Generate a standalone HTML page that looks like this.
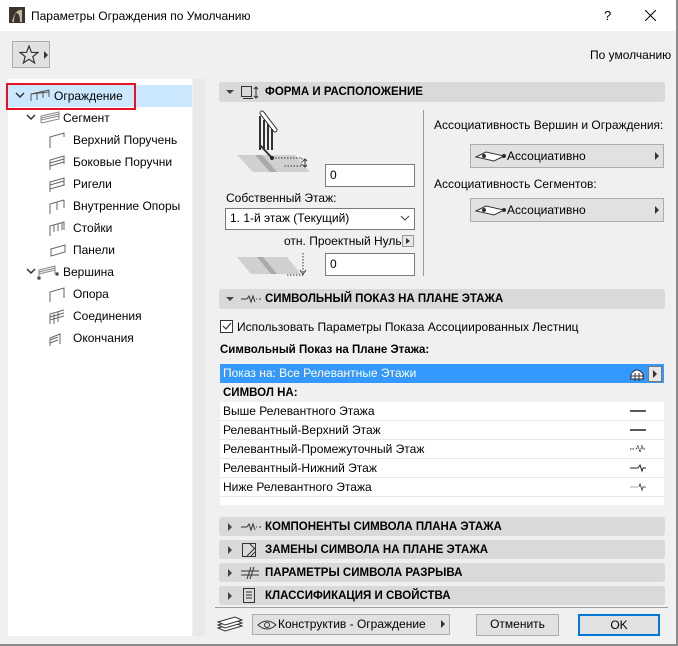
<!DOCTYPE html><html><head><meta charset="utf-8"><style>
*{margin:0;padding:0;box-sizing:border-box}
body{width:678px;height:646px;background:#f0f0f0;font-family:"Liberation Sans",sans-serif;font-size:12px;color:#000;position:relative;overflow:hidden}
.a{position:absolute;white-space:nowrap}
.hdr{position:absolute;left:219px;width:446px;height:20px;background:#d9d9d9;border-radius:3px;font-weight:bold;font-size:11.5px;line-height:21px}
.hdr .t{position:absolute;left:46px}
.tri{position:absolute;left:7px;top:8px;width:0;height:0;border-left:4px solid transparent;border-right:4px solid transparent;border-top:4px solid #444}
.trr{position:absolute;left:9px;top:6px;width:0;height:0;border-top:4px solid transparent;border-bottom:4px solid transparent;border-left:4px solid #444}
.inp{position:absolute;background:#fff;border:1px solid #7a7a7a;padding-left:4px;line-height:20px}
.btn{position:absolute;background:#e1e1e1;border:1px solid #adadad;text-align:center;line-height:19px}
.tr{position:absolute;white-space:nowrap;line-height:16px}
.row{position:absolute;left:220px;width:444px;height:19px;background:#fff;border-bottom:1px solid #e8e8e8;line-height:19px;padding-left:3px}
.row svg{position:absolute;right:18px;top:4px}
</style></head><body>
<div class="a" style="left:0;top:0;width:678px;height:31px;background:#fff"></div>
<svg class="a" style="left:9px;top:7px" width="16" height="16"><rect width="16" height="16" fill="#3a3530"/><path d="M3 15 Q6 2 13 3 L13 15 L11 15 Q11 6 7 6 Q5 9 5 15Z" fill="#c8b89a"/></svg>
<div class="a" style="left:31px;top:9px;font-size:12px">Параметры Ограждения по Умолчанию</div>
<div class="a" style="left:604px;top:8px;font-size:13px">?</div>
<svg class="a" style="left:645px;top:10px" width="11" height="11"><path d="M0 0L11 11M11 0L0 11" stroke="#000" stroke-width="1"/></svg>
<div class="a" style="left:676px;top:0;width:2px;height:646px;background:#8a8a8a"></div>
<div class="a" style="left:0;top:644px;width:678px;height:2px;background:#8a8a8a"></div>
<div class="a" style="left:12px;top:41px;width:38px;height:27px;border:1px solid #adadad;background:#e1e1e1"></div>
<svg class="a" style="left:19px;top:45px" width="20" height="19"><path d="M10 1L12.4 7.3 19 7.5 13.8 11.6 15.6 18 10 14.3 4.4 18 6.2 11.6 1 7.5 7.6 7.3Z" fill="none" stroke="#333" stroke-width="1.2"/></svg>
<div class="a" style="left:44px;top:51px;border-top:4px solid transparent;border-bottom:4px solid transparent;border-left:4px solid #333"></div>
<div class="a" style="left:590px;top:48px">По умолчанию</div>
<div class="a" style="left:8px;top:79px;width:184px;height:557px;background:#fff"></div>
<div class="a" style="left:193px;top:79px;width:12px;height:557px;background:#e8e8e8"></div>
<div class="a" style="left:8px;top:85px;width:184px;height:22px;background:#cce8ff"></div>
<div class="a" style="left:6px;top:83px;width:130px;height:27px;border:2px solid #e81123"></div>
<svg class="a" style="left:15px;top:92px" width="10" height="7"><path d="M1 1L5 5 9 1" fill="none" stroke="#333" stroke-width="1.5"/></svg>
<svg class="a" style="left:30px;top:89px" width="20" height="13"><path d="M1 12V5L19 1V8M1 5L19 3M7 11V4M13 9V2" fill="none" stroke="#555" stroke-width="1"/></svg>
<div class="tr" style="left:54px;top:88px">Ограждение</div>
<svg class="a" style="left:26px;top:114px" width="10" height="7"><path d="M1 1L5 5 9 1" fill="none" stroke="#333" stroke-width="1.5"/></svg>
<svg class="a" style="left:40px;top:111px" width="20" height="13"><path d="M1 12V5L19 1V8L1 12M1 7L19 3M1 9L19 5" fill="none" stroke="#888" stroke-width="1"/></svg>
<div class="tr" style="left:63px;top:110px">Сегмент</div>
<div class="tr" style="left:73px;top:132px">Верхний Поручень</div>
<div class="tr" style="left:73px;top:154px">Боковые Поручни</div>
<div class="tr" style="left:73px;top:176px">Ригели</div>
<div class="tr" style="left:73px;top:198px">Внутренние Опоры</div>
<div class="tr" style="left:73px;top:220px">Стойки</div>
<div class="tr" style="left:73px;top:242px">Панели</div>
<svg class="a" style="left:26px;top:268px" width="10" height="7"><path d="M1 1L5 5 9 1" fill="none" stroke="#333" stroke-width="1.5"/></svg>
<div class="tr" style="left:63px;top:264px">Вершина</div>
<div class="tr" style="left:73px;top:286px">Опора</div>
<div class="tr" style="left:73px;top:308px">Соединения</div>
<div class="tr" style="left:73px;top:330px">Окончания</div>
<svg class="a" style="left:48px;top:132px" width="20" height="220" fill="none" stroke="#666" stroke-width="1">
<path d="M2 16V5L16 1V5"/>
<path d="M2 38V28L16 24V32M2 31L16 27M2 34L16 30"/>
<path d="M2 60V50L16 46V54M2 53L16 49M2 57L16 53"/>
<path d="M2 82V72L16 68M9 78V70M16 68V76"/>
<path d="M2 104V94L16 90V98M6 100V93M10 99V92M14 98V91"/>
<path d="M3 124L3 117L17 113L17 120L3 124Z"/>
<path d="M2 170V160L16 156V166"/>
<path d="M2 192V182L16 178M2 185L16 181M2 188L16 184M6 192V182M10 190V180"/>
<path d="M2 214V206L12 202V212M2 208L10 205M2 211L10 208"/>
</svg>
<svg class="a" style="left:36px;top:264px" width="24" height="16" fill="none" stroke="#888" stroke-width="1"><path d="M3 14V6L19 2V10M3 8L19 4M3 10L19 6"/><circle cx="3" cy="14" r="1.5" fill="#333"/><circle cx="21" cy="10" r="1.5" fill="#333"/></svg>
<div class="hdr" style="top:82px"><div class="tri"></div>
<svg class="a" style="left:21px;top:3px" width="20" height="15" fill="none" stroke="#333"><rect x="1.5" y="1.5" width="10" height="10"/><path d="M3 13.5H13M16 2V13M14 4L16 2 18 4M14 11L16 13 18 11"/></svg>
<div class="t">ФОРМА И РАСПОЛОЖЕНИЕ</div></div>
<svg class="a" style="left:235px;top:110px" width="80" height="70">
<path d="M2 45L60 45 75 62 18 62Z" fill="#d0d0d0"/><path d="M20 45L35 62H42L27 45Z" fill="#aaa"/>
<path d="M27 3L40 20" stroke="#333" stroke-width="5" stroke-linecap="round"/><path d="M27 3L40 20" stroke="#fff" stroke-width="3" stroke-linecap="round"/>
<path d="M25 6V40M29 10V40M33 14V40M37 19V40" stroke="#333" stroke-width="2"/>
<path d="M25 35L37 48" stroke="#333" stroke-width="2"/><circle cx="37" cy="48" r="2" fill="#222"/>
<path d="M37 48H67V56H48" stroke="#333" stroke-dasharray="1.5 1.5" fill="none"/><path d="M70 50V56M68 51L70 49 72 51M68 55L70 57 72 55" stroke="#333" fill="none"/>
</svg>
<div class="inp" style="left:325px;top:164px;width:90px;height:23px">0</div>
<div class="a" style="left:226px;top:191px">Собственный Этаж:</div>
<div class="inp" style="left:225px;top:208px;width:190px;height:22px;line-height:19px">1. 1-й этаж (Текущий)</div>
<svg class="a" style="left:400px;top:215px" width="10" height="6"><path d="M1 1L5 5 9 1" fill="none" stroke="#444"/></svg>
<div class="a" style="left:284px;top:234px">отн. Проектный Нуль</div>
<div class="a" style="left:402px;top:235px;width:12px;height:12px;border:1px solid #999;background:#e8e8e8"></div>
<div class="a" style="left:406px;top:238px;border-top:3px solid transparent;border-bottom:3px solid transparent;border-left:4px solid #333"></div>
<svg class="a" style="left:235px;top:252px" width="75" height="30"><path d="M2 5L52 5 66 22 16 22Z" fill="#d0d0d0"/><path d="M22 5L36 22H42L28 5Z" fill="#aaa"/><path d="M68 1V20" stroke="#333" stroke-dasharray="1.5 1.5"/><path d="M65 18L68 22 71 18" stroke="#333" fill="none"/><path d="M52 23H70" stroke="#333" stroke-dasharray="1.5 1.5"/></svg>
<div class="inp" style="left:325px;top:253px;width:90px;height:23px">0</div>
<div class="a" style="left:423px;top:110px;width:1px;height:166px;background:#999"></div>
<div class="a" style="left:434px;top:118px">Ассоциативность Вершин и Ограждения:</div>
<div class="btn" style="left:470px;top:144px;width:194px;height:24px;text-align:left;padding-left:36px;line-height:22px">Ассоциативно</div>
<div class="a" style="left:434px;top:177px">Ассоциативность Сегментов:</div>
<div class="btn" style="left:470px;top:198px;width:194px;height:24px;text-align:left;padding-left:36px;line-height:22px">Ассоциативно</div>
<svg class="a" style="left:474px;top:149px" width="200" height="70" fill="#fff" stroke="#333"><path d="M2 8L12 3 30 7 20 12Z"/><circle cx="10" cy="7" r="1.5" fill="#222"/><circle cx="30" cy="7" r="1.5" fill="#222"/><path d="M2 62L12 57 30 61 20 66Z"/><circle cx="10" cy="61" r="1.5" fill="#222"/><circle cx="30" cy="61" r="1.5" fill="#222"/><path d="M181 3V11L185 7Z" fill="#333" stroke="none"/><path d="M181 57V65L185 61Z" fill="#333" stroke="none"/></svg>
<div class="hdr" style="top:289px"><div class="tri"></div>
<svg class="a" style="left:22px;top:5px" width="20" height="10" stroke="#333" fill="none"><path d="M0 5H6M6 5L8 2 10 8 12 2 14 8M15 5H16M18 5H20"/></svg>
<div class="t">СИМВОЛЬНЫЙ ПОКАЗ НА ПЛАНЕ ЭТАЖА</div></div>
<div class="a" style="left:220px;top:320px;width:13px;height:13px;border:1px solid #333;background:#fff"></div>
<svg class="a" style="left:222px;top:322px" width="10" height="9"><path d="M1 4L4 7 9 1" fill="none" stroke="#333" stroke-width="1.2"/></svg>
<div class="a" style="left:237px;top:320px">Использовать Параметры Показа Ассоциированных Лестниц</div>
<div class="a" style="left:220px;top:344px;font-weight:bold;font-size:11.5px">Символьный Показ на Плане Этажа:</div>
<div class="a" style="left:220px;top:364px;width:444px;height:19px;background:#3399ff;color:#fff;line-height:19px;padding-left:3px">Показ на: Все Релевантные Этажи</div>
<svg class="a" style="left:629px;top:366px" width="34" height="16"><path d="M2 8Q8 0 14 8V13H2Z" fill="#fff" stroke="#333"/><path d="M1 10H15M1 13H15M6 7V15M10 7V15" stroke="#333"/><rect x="19.5" y="0.5" width="13" height="15" fill="#e8e8e8" stroke="#777"/><path d="M24 4V12L28 8Z" fill="#333"/></svg>
<div class="a" style="left:223px;top:387px;font-weight:bold;font-size:11.5px">СИМВОЛ НА:</div>
<div class="row" style="top:402px">Выше Релевантного Этажа<svg width="16" height="10"><path d="M0 5H16" stroke="#222" stroke-width="1.5"/></svg></div>
<div class="row" style="top:421px">Релевантный-Верхний Этаж<svg width="16" height="10"><path d="M0 5H16" stroke="#222" stroke-width="1.5"/></svg></div>
<div class="row" style="top:440px">Релевантный-Промежуточный Этаж<svg width="16" height="10"><path d="M0 5H4M6 5L8 2 10 8 12 2 13 5H16" stroke="#222" stroke-dasharray="1.5 1" fill="none"/></svg></div>
<div class="row" style="top:459px">Релевантный-Нижний Этаж<svg width="16" height="10"><path d="M0 5H8L10 2 12 8 13 5H16" stroke="#222" fill="none"/></svg></div>
<div class="row" style="top:478px">Ниже Релевантного Этажа<svg width="16" height="10"><path d="M0 5H8" stroke="#aaa"/><path d="M9 5L10 2 12 8 13 5H16" stroke="#555" fill="none"/></svg></div>
<div class="a" style="left:220px;top:497px;width:444px;height:8px;background:#fff"></div>
<div class="hdr" style="top:517px;height:19px;line-height:21px"><div class="trr"></div><svg class="a" style="left:22px;top:5px" width="20" height="10" stroke="#333" fill="none"><path d="M0 5H6M6 5L8 2 10 8 12 2 14 8M15 5H16M18 5H20"/></svg><div class="t">КОМПОНЕНТЫ СИМВОЛА ПЛАНА ЭТАЖА</div></div>
<div class="hdr" style="top:540px;height:19px;line-height:21px"><div class="trr"></div><svg class="a" style="left:22px;top:2px" width="16" height="16" stroke="#333" fill="none"><rect x="1.5" y="1.5" width="13" height="13"/><path d="M9 2L14 7M6 14L14 6M10 14L14 10" /></svg><div class="t">ЗАМЕНЫ СИМВОЛА НА ПЛАНЕ ЭТАЖА</div></div>
<div class="hdr" style="top:563px;height:19px;line-height:21px"><div class="trr"></div><svg class="a" style="left:22px;top:3px" width="18" height="14" stroke="#333" fill="none"><path d="M0 5H18M0 9H18M6 13L10 1M9 13L13 1"/></svg><div class="t">ПАРАМЕТРЫ СИМВОЛА РАЗРЫВА</div></div>
<div class="hdr" style="top:586px;height:19px;line-height:21px"><div class="trr"></div><svg class="a" style="left:23px;top:2px" width="14" height="16" stroke="#333" fill="none"><rect x="1.5" y="0.5" width="11" height="14"/><path d="M4 4H10M4 7H10M4 10H10"/></svg><div class="t">КЛАССИФИКАЦИЯ И СВОЙСТВА</div></div>
<div class="a" style="left:215px;top:607px;width:453px;height:1px;background:#a0a0a0"></div>
<svg class="a" style="left:217px;top:615px" width="26" height="18" fill="#fff" stroke="#333"><path d="M1 13L8 16 25 11 18 8Z"/><path d="M1 10L8 13 25 8 18 5Z"/><path d="M1 7L8 10 25 5 18 2Z"/></svg>
<div class="btn" style="left:252px;top:614px;width:198px;height:21px;text-align:left;padding-left:25px">Конструктив - Ограждение</div>
<svg class="a" style="left:257px;top:619px" width="20" height="12" fill="none" stroke="#333"><path d="M1 6Q10 -2 19 6Q10 14 1 6Z"/><circle cx="10" cy="6" r="2.5"/></svg>
<div class="a" style="left:441px;top:620px;border-top:4px solid transparent;border-bottom:4px solid transparent;border-left:4px solid #333"></div>
<div class="btn" style="left:476px;top:614px;width:83px;height:22px">Отменить</div>
<div class="btn" style="left:578px;top:614px;width:82px;height:22px;border:2px solid #0078d7;line-height:18px">OK</div>
</body></html>
